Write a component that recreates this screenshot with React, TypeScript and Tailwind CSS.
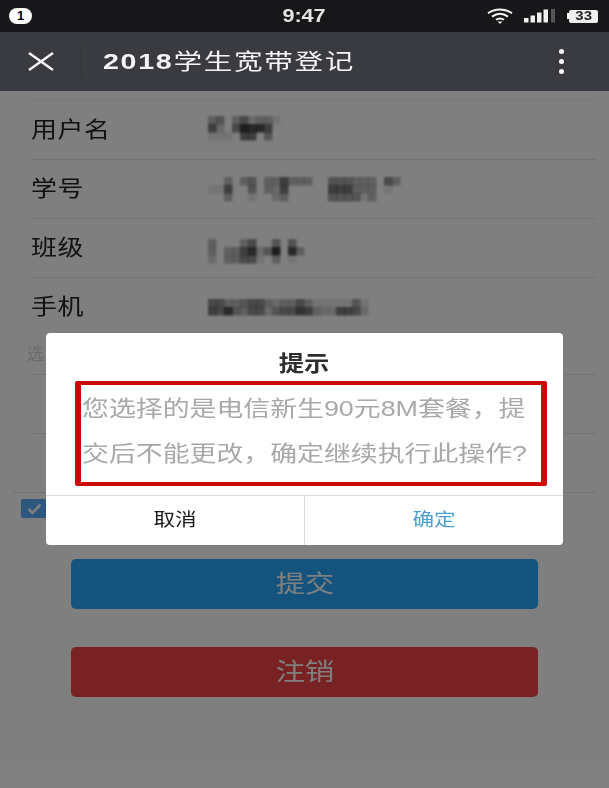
const font = "font-['Liberation_Sans','Noto_Sans_CJK_SC',sans-serif]";

// mosaic blur over the personal data, one digit per 8px block (0-9 darkness)
function Mosaic({ rows, className }: { rows: string[]; className?: string }) {
  const cols = rows[0].length;
  return (
    <svg width={cols * 8} height={rows.length * 8} className={`overflow-visible ${className ?? ""}`}>
      <filter id="soft">
        <feGaussianBlur stdDeviation="1" />
      </filter>
      <g filter="url(#soft)">
        {rows.map((row, y) =>
          row.split("").map((d, x) => (
            <rect key={x + "-" + y} x={x * 8} y={y * 8} width="8.5" height="8.5" fill="#000" opacity={(Number(d) / 10) * 0.85} />
          )),
        )}
      </g>
    </svg>
  );
}

function FormRow({ label, rows, first, mosaicClass }: { label: string; rows: string[]; first?: boolean; mosaicClass?: string }) {
  return (
    <div className={`flex h-[59px] items-center pb-[1px] ${first ? "border-t border-[#f2f2f2]" : "border-t border-[#e6e6e6]"}`}>
      <span className="w-[177px] text-[22px] text-[#222]">
        <span className="inline-block origin-left scale-x-[1.18] tracking-[0.5px]">{label}</span>
      </span>
      <Mosaic rows={rows} className={mosaicClass} />
    </div>
  );
}

function StatusBar() {
  return (
    <div className="flex h-8 items-center justify-between bg-[#17171a] pl-[9px] pr-[11px] text-white">
      <span className="flex h-4 w-[23px] items-center justify-center rounded-full bg-white text-[13px] font-bold text-black">1</span>
      <span className="absolute left-[286px] inline-block scale-x-[1.2] text-[18px] font-bold text-[#e4e4e4]">9:47</span>
      <div className="flex items-center">
        <svg width="26" height="16" viewBox="0 0 26 16" fill="none" stroke="#f2f2f2" strokeWidth="2">
          <path d="M1 5.2C8 .2 18 .2 25 5.2" />
          <path d="M5 8.6C10 5 16 5 21 8.6" />
          <path d="M9 11.8C11.6 10 14.4 10 17 11.8" />
          <path d="M10.5 13.4L13 16L15.5 13.4Z" fill="#f2f2f2" stroke="none" />
        </svg>
        <svg width="32" height="14" viewBox="0 0 32 14" className="ml-[11px]">
          <rect x="0" y="9" width="4.5" height="4.5" fill="#f0f0f0" />
          <rect x="6.5" y="6.5" width="4.5" height="7" fill="#f0f0f0" />
          <rect x="13" y="3.5" width="4.5" height="10" fill="#f0f0f0" />
          <rect x="19.5" y="0.5" width="4.5" height="13" fill="#f0f0f0" />
          <rect x="27" y="0" width="4" height="13.5" fill="#55565a" />
        </svg>
        <div className="ml-[11px] flex items-center">
          <span className="h-[6px] w-[2px] bg-white" />
          <span className="flex h-[13px] w-[29px] items-center justify-center rounded-[2px] bg-[#efefef] text-[12px] font-bold text-[#222]">
            <span className="inline-block scale-x-[1.25]">33</span>
          </span>
        </div>
      </div>
    </div>
  );
}

function NavBar() {
  return (
    <div className="flex h-[59px] items-center bg-[#3a3b40] text-[#f4f4f4]">
      <svg width="26" height="19" viewBox="0 0 26 19" className="ml-[28px]" stroke="#f7f7f7" strokeWidth="2.4" fill="none">
        <path d="M1 1L25 18M25 1L1 18" />
      </svg>
      <div className="ml-[27px] h-[30px] w-px bg-[#303135]" />
      <span className="ml-[21px] text-[22px]">
        <span className="inline-block origin-left scale-x-[1.3] tracking-[1.3px]">
          <span className="font-bold">2018</span>学生宽带登记
        </span>
      </span>
      <div className="ml-auto mr-[45px] flex flex-col gap-[4.5px]">
        <span className="size-[5.5px] rounded-full bg-white" />
        <span className="size-[5.5px] rounded-full bg-white" />
        <span className="size-[5.5px] rounded-full bg-white" />
      </div>
    </div>
  );
}

function ConfirmDialog() {
  return (
    <div className="absolute left-[46px] top-[242px] flex h-[212px] w-[517px] flex-col rounded-[4px] bg-white">
      <div className="flex h-[48px] items-center justify-center pt-[13px] text-[22px] font-bold text-[#2f2f2f]">
        <span className="inline-block scale-x-[1.15]">提示</span>
      </div>
      <div className="ml-[29px] mr-[16px] h-[105px] rounded-[2px] border-x-[6px] border-y-[4px] border-[#cc0a0a] pl-[1px] pt-[2px] text-[21.5px] leading-[45px] text-[#a8a8a8]">
        <div className="origin-left scale-x-[1.25] whitespace-nowrap">您选择的是电信新生90元8M套餐，提</div>
        <div className="origin-left scale-x-[1.25] whitespace-nowrap">交后不能更改，确定继续执行此操作?</div>
      </div>
      <div className="mt-[9px] flex flex-1 border-t border-[#dcdcdc] text-[18px]">
        <button type="button" className="flex-1 border-r border-[#dcdcdc] text-[#1d1d1d]">
          <span className="inline-block scale-x-[1.2]">取消</span>
        </button>
        <button type="button" className="w-[258px] text-[#4b9fd0]">
          <span className="inline-block scale-x-[1.2]">确定</span>
        </button>
      </div>
    </div>
  );
}

export default function App() {
  return (
    <div className={`${font} relative h-[788px] w-[609px] overflow-hidden bg-white`}>
      <StatusBar />
      <NavBar />

      <main className="relative h-[697px] overflow-hidden">
        <div className="pt-[9px]">
          <div className="ml-[31px] mr-[13px]">
            <FormRow first label="用户名" rows={["340352331", "620598860", "111066040"]} mosaicClass="mb-[3px]" />
            <FormRow label="学号" rows={["003034033633300444333053", "116004032600000666333010", "003001002300000444413000"]} />
            <FormRow label="班级" rows={["300035004040", "303368249083", "203355103010"]} mosaicClass="mt-[6px]" />
            <FormRow label="手机" rows={["55334553233531111141", "65843552455763226652"]} />
          </div>
          <div className="ml-[27px] flex h-[38px] items-center text-[17px] text-[#d4d4d4]">选</div>
          <div className="ml-[31px] mr-[13px] h-[59px] border-t border-[#e6e6e6]" />
          <div className="ml-[31px] mr-[13px] h-[59px] border-t border-[#e6e6e6]" />
          <div className="ml-[13px] mr-[13px] h-[67px] border-t border-[#e6e6e6] pl-[8px] pt-[6px]">
            <span className="flex h-[19px] w-[26px] items-center justify-center rounded-[2px] bg-[#5aaeff]">
              <svg width="15" height="12" viewBox="0 0 15 12" fill="none" stroke="#fff" strokeWidth="2.6">
                <path d="M1.5 6L5.5 10L13.5 1.5" />
              </svg>
            </span>
          </div>
          <div className="flex flex-col gap-[38px] px-[71px]">
            <button type="button" className="h-[50px] rounded-[5px] bg-[#2aa6fe] text-[24px] text-white">
              <span className="inline-block scale-x-[1.22]">提交</span>
            </button>
            <button type="button" className="h-[50px] rounded-[5px] bg-[#f24446] text-[24px] text-white">
              <span className="inline-block scale-x-[1.22]">注销</span>
            </button>
          </div>
        </div>

        <div className="absolute inset-0 bg-black/50" />
        <ConfirmDialog />
      </main>
    </div>
  );
}
